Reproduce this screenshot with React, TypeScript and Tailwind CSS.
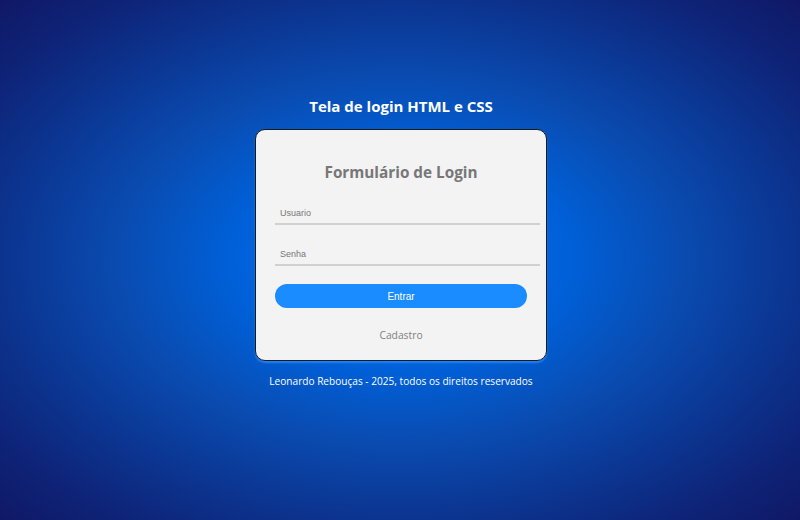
import React from "react";

export default function App() {
  return (
    <div
      className="w-[800px] h-[520px] overflow-hidden flex flex-col items-center pt-[95px] bg-[radial-gradient(ellipse_at_center,#0a6ef2_0%,#0060d8_30%,#0a4bb0_50%,#0b3a98_65%,#0e2478_85%,#101866_100%)]"
      style={{ fontFamily: '"Open Sans", sans-serif' }}
    >
      <h1 className="text-white font-bold text-[15px] leading-[22px] mb-[12px] ml-[2px]">
        Tela de login HTML e CSS
      </h1>
      <div className="ml-[2px] w-[292px] bg-[#f3f3f3] border border-[#1a1a1a] rounded-[10px] pt-[30px] pb-[16px] pl-[19px] pr-[6px] flex flex-col shadow-[0_2px_2px_rgba(40,140,255,0.8)]">
        <h2 className="text-[#777777] font-bold text-[15.3px] leading-[24px] text-center pr-[13px]">
          Formulário de Login
        </h2>
        <input
          type="text"
          placeholder="Usuario"
          className="mt-[18px] w-[265px] h-[23px] bg-transparent border-b-2 border-[#d0d0d0] pl-[5px] text-[9px] outline-none placeholder:text-[#777777]"
          style={{ fontFamily: '"Liberation Sans", Arial, sans-serif' }}
        />
        <input
          type="password"
          placeholder="Senha"
          className="mt-[18px] w-[265px] h-[23px] bg-transparent border-b-2 border-[#d0d0d0] pl-[5px] text-[9px] outline-none placeholder:text-[#777777]"
          style={{ fontFamily: '"Liberation Sans", Arial, sans-serif' }}
        />
        <button
          className="mt-[18px] w-[252px] h-[24px] rounded-full bg-[#1a8cff] text-white text-[10px]"
          style={{ fontFamily: '"Liberation Sans", Arial, sans-serif' }}
        >
          Entrar
        </button>
        <div className="mt-[18px] text-center text-[#808080] text-[10.3px] leading-[18px] pr-[13px]">
          Cadastro
        </div>
      </div>
      <p className="mt-[11px] text-white text-[10.1px] leading-[18px] ml-[2px]">
        Leonardo Rebouças - 2025, todos os direitos reservados
      </p>
    </div>
  );
}
